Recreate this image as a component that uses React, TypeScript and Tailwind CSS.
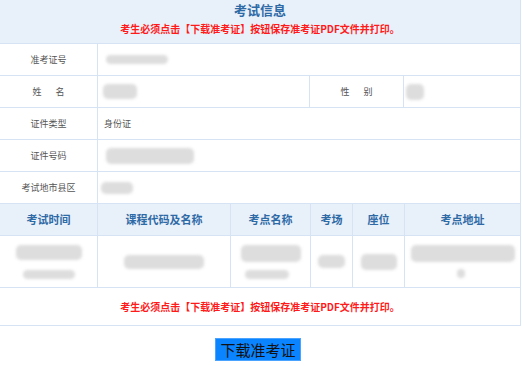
import React from "react";

const font = { fontFamily: '"Noto Sans CJK SC", "Noto Sans", sans-serif' };

const Smudge = ({ className }: { className: string }) => (
  <div className={`rounded-[5px] bg-[#dddddd] blur-[1.5px] ${className}`} />
);

const Label = ({ children, w = "w-[98px]" }: { children: React.ReactNode; w?: string }) => (
  <div className={`${w} shrink-0 h-full flex items-center justify-center border-r border-[#d5e3f5] text-[9px] text-[#555]`}>
    {children}
  </div>
);

const Row = ({ children }: { children: React.ReactNode }) => (
  <div className="flex h-[32px] border-b border-[#d5e3f5]">{children}</div>
);

const notice = "考生必须点击【下载准考证】按钮保存准考证PDF文件并打印。";

const heads = [
  { t: "考试时间", w: "w-[98px]" },
  { t: "课程代码及名称", w: "w-[133px]" },
  { t: "考点名称", w: "w-[80px]" },
  { t: "考场", w: "w-[42px]" },
  { t: "座位", w: "w-[52px]" },
  { t: "考点地址", w: "flex-1" },
];

export default function App() {
  return (
    <div style={font} className="w-[522px] h-[366px] bg-white overflow-hidden">
      <div className="w-[521px] border-r border-[#d5e3f5]">
        <div className="h-[44px] bg-[#e8f0f9] border-b border-[#d5e3f5] flex flex-col items-center pt-[1px]">
          <div className="text-[13px] font-bold text-[#2e6aa6] leading-[18px]">考试信息</div>
          <div className="text-[10px] font-bold text-[#ff1a1a] leading-[14px] mt-[3px]">{notice}</div>
        </div>

        <Row>
          <Label>准考证号</Label>
          <div className="flex items-center pl-[8px]">
            <Smudge className="w-[62px] h-[9px]" />
          </div>
        </Row>
        <Row>
          <Label>姓&nbsp;&nbsp;&nbsp;&nbsp;&nbsp;&nbsp;&nbsp;名</Label>
          <div className="w-[212px] h-full flex items-center pl-[5px] border-r border-[#d5e3f5]">
            <Smudge className="w-[34px] h-[15px]" />
          </div>
          <Label w="w-[94px]">性&nbsp;&nbsp;&nbsp;&nbsp;&nbsp;&nbsp;&nbsp;别</Label>
          <div className="flex items-center pl-[2px]">
            <Smudge className="w-[18px] h-[16px]" />
          </div>
        </Row>
        <Row>
          <Label>证件类型</Label>
          <div className="flex items-center pl-[6px] text-[9px] text-[#555]">身份证</div>
        </Row>
        <Row>
          <Label>证件号码</Label>
          <div className="flex items-center pl-[8px]">
            <Smudge className="w-[88px] h-[16px]" />
          </div>
        </Row>
        <Row>
          <Label>考试地市县区</Label>
          <div className="flex items-center pl-[3px]">
            <Smudge className="w-[32px] h-[12px]" />
          </div>
        </Row>

        <div className="flex h-[32px] bg-[#e8f0f9] border-b border-[#d5e3f5]">
          {heads.map((c, i) => (
            <div
              key={c.t}
              className={`${c.w} shrink-0 flex items-center justify-center text-[11px] font-bold text-[#2e6aa6] ${i < 5 ? "border-r border-[#d5e3f5]" : ""}`}
            >
              {c.t}
            </div>
          ))}
        </div>

        <div className="flex h-[52px] border-b border-[#d5e3f5]">
          <div className="w-[98px] shrink-0 border-r border-[#d5e3f5] flex flex-col items-center justify-center gap-[10px]">
            <Smudge className="w-[66px] h-[15px]" />
            <Smudge className="w-[52px] h-[9px]" />
          </div>
          <div className="w-[133px] shrink-0 border-r border-[#d5e3f5] flex items-center justify-center">
            <Smudge className="w-[80px] h-[14px]" />
          </div>
          <div className="w-[80px] shrink-0 border-r border-[#d5e3f5] flex flex-col items-center justify-center gap-[8px]">
            <Smudge className="w-[60px] h-[17px]" />
            <Smudge className="w-[44px] h-[9px] mr-[8px]" />
          </div>
          <div className="w-[42px] shrink-0 border-r border-[#d5e3f5] flex items-center justify-center">
            <Smudge className="w-[27px] h-[13px]" />
          </div>
          <div className="w-[52px] shrink-0 border-r border-[#d5e3f5] flex items-center justify-center">
            <Smudge className="w-[36px] h-[16px]" />
          </div>
          <div className="flex-1 flex flex-col items-center justify-center gap-[7px]">
            <Smudge className="w-[104px] h-[17px]" />
            <Smudge className="w-[8px] h-[9px] mr-[4px]" />
          </div>
        </div>

        <div className="h-[38px] border-b border-[#d5e3f5] flex items-center justify-center">
          <div className="text-[10px] font-bold text-[#ff1a1a]">{notice}</div>
        </div>
      </div>

      <div className="flex justify-center pt-[12px]">
        <button className="h-[23px] px-[4px] bg-[#0a84ff] border border-[#4aa3ff] text-[15px] leading-[21px] text-[#111] mr-[6px]">
          下载准考证
        </button>
      </div>
    </div>
  );
}
